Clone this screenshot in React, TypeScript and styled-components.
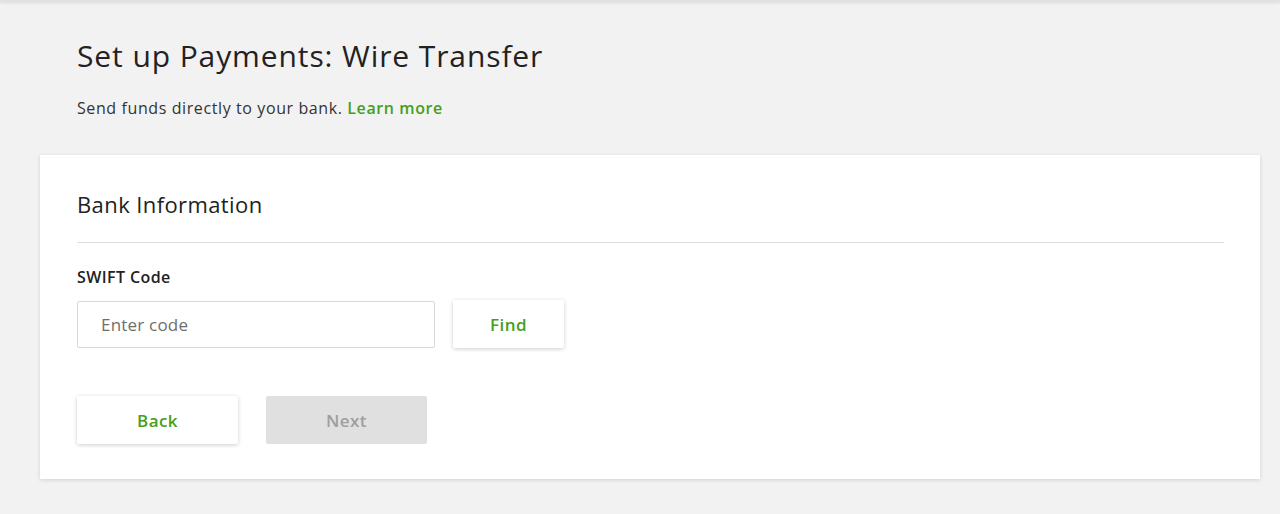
import styled, { createGlobalStyle } from 'styled-components';

const GlobalStyle = createGlobalStyle`
body {
  margin: 0;
  background: #f2f2f2;
  font-family: "Open Sans", "Liberation Sans", sans-serif;
  color: #222222;
}
`

const Page = styled.div`
min-height: 514px;
background: #f2f2f2;
`

const TopEdge = styled.div`
height: 2px;
background: #e2e2e2;
box-shadow: 0 1px 3px rgba(0, 0, 0, 0.12);
`

const Header = styled.div`
padding: 33px 77px 0;
`

const Title = styled.h1`
margin: 0;
font-size: 30px;
font-weight: 400;
letter-spacing: 0.9px;
color: #222222;
`

const Subtitle = styled.p`
margin: 21px 0 0;
font-size: 16px;
letter-spacing: 0.6px;
color: #333333;
`

const Link = styled.a`
color: #44a01c;
font-weight: 600;
text-decoration: none;
`

const Card = styled.section`
margin: 36px 20px 0 40px;
background: #ffffff;
box-shadow: 0 1px 4px rgba(0, 0, 0, 0.14);
padding: 34px 36px 35px 37px;
`

const CardTitle = styled.h2`
margin: 0;
font-size: 22px;
font-weight: 400;
letter-spacing: 0.4px;
color: #222222;
padding-bottom: 23px;
border-bottom: 1px solid #dedede;
`

const Label = styled.div`
margin-top: 23px;
font-size: 16px;
font-weight: 600;
letter-spacing: 0.4px;
color: #222222;
`

const Row = styled.div`
display: flex;
align-items: center;
gap: 18px;
margin-top: 12px;
`

const Input = styled.input`
box-sizing: border-box;
width: 358px;
height: 47px;
border: 1px solid #d9d9d9;
border-radius: 2px;
padding: 0 23px;
font-family: inherit;
font-size: 17px;
letter-spacing: 0.2px;
color: #333333;
outline: none;
&::placeholder {
  color: #6e6e6e;
}
`

const Button = styled.button<{ disabled?: boolean; wide?: boolean }>`
box-sizing: border-box;
width: ${({ wide }) => (wide ? '161px' : '111px')};
height: 48px;
border: none;
border-radius: 2px;
font-family: inherit;
font-size: 17px;
font-weight: 600;
letter-spacing: 0.4px;
cursor: pointer;
background: ${({ disabled }) => (disabled ? '#e0e0e0' : '#ffffff')};
color: ${({ disabled }) => (disabled ? '#9e9e9e' : '#44a01c')};
box-shadow: ${({ disabled }) => (disabled ? 'none' : '0 1px 4px rgba(0, 0, 0, 0.2)')};
`

const Actions = styled.div`
display: flex;
gap: 28px;
margin-top: 48px;
`

export default function App() {
  return (
    <Page>
      <GlobalStyle />
      <TopEdge />
      <Header>
        <Title>Set up Payments: Wire Transfer</Title>
        <Subtitle>
          Send funds directly to your bank. <Link href="#">Learn more</Link>
        </Subtitle>
      </Header>
      <Card>
        <CardTitle>Bank Information</CardTitle>
        <Label>SWIFT Code</Label>
        <Row>
          <Input placeholder="Enter code" />
          <Button>Find</Button>
        </Row>
        <Actions>
          <Button wide>Back</Button>
          <Button wide disabled>Next</Button>
        </Actions>
      </Card>
    </Page>
  );
}
